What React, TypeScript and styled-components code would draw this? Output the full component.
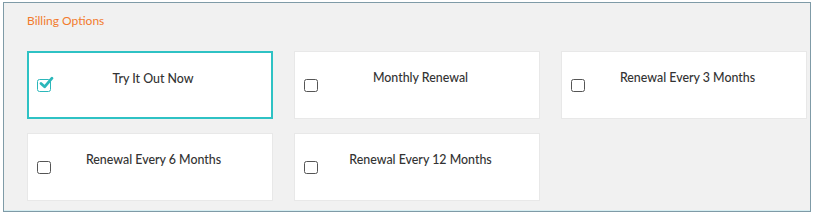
import styled, { createGlobalStyle } from "styled-components";

const GlobalStyle = createGlobalStyle`
  html, body {
    margin: 0;
    padding: 0;
    background: #ffffff;
  }
  body {
    font-family: Lato, "Liberation Sans", sans-serif;
  }
`;

const Panel = styled.section`
  box-sizing: border-box;
  margin: 2px 0 0 3px;
  width: 808px;
  height: 210px;
  background: #f1f1f1;
  border: 1px solid #7f9ba7;
  box-shadow: inset 0 -1px 0 #d6eef2;
  padding: 10px 0 0 23px;
`;

const Title = styled.h3`
  margin: 0;
  font-size: 12px;
  line-height: 16px;
  font-weight: 400;
  color: #f27b2d;
`;

const Grid = styled.div`
  display: grid;
  grid-template-columns: repeat(3, 246px);
  column-gap: 21px;
  row-gap: 14px;
  margin-top: 22px;
`;

const Card = styled.label<{ $selected?: boolean }>`
  box-sizing: border-box;
  height: 68px;
  display: flex;
  align-items: center;
  padding: 0 16px 0 ${(p) => (p.$selected ? 8 : 9)}px;
  background: #ffffff;
  border: ${(p) => (p.$selected ? "2px solid #2ec2c4" : "1px solid #e8e8e8")};
  cursor: pointer;
`;

const Box = styled.span<{ $checked?: boolean }>`
  position: relative;
  box-sizing: border-box;
  flex: 0 0 14px;
  width: 14px;
  height: 13px;
  margin-top: ${(p) => (p.$checked ? 0 : 1)}px;
  border-radius: 2.5px;
  border: 1.6px solid ${(p) => (p.$checked ? "#2bb7ba" : "#555555")};
  background: #ffffff;
`;

const Label = styled.span`
  flex: 1;
  align-self: flex-start;
  margin-top: 18px;
  text-align: center;
  font-size: 12.4px;
  line-height: 16px;
  font-weight: 500;
  color: #333333;
`;

const CheckMark = styled.svg`
  position: absolute;
  left: 1px;
  top: -4px;
`;

const options = [
  "Try It Out Now",
  "Monthly Renewal",
  "Renewal Every 3 Months",
  "Renewal Every 6 Months",
  "Renewal Every 12 Months",
];

const Check = () => (
  <CheckMark width="15" height="14" viewBox="0 0 15 14">
    <path
      d="M2 7.5 L5.6 10.8 L13 2.2"
      fill="none"
      stroke="#2bb7ba"
      strokeWidth="2.8"
      strokeLinecap="round"
      strokeLinejoin="round"
    />
  </CheckMark>
);

export default function App() {
  const selected = 0;
  return (
    <>
      <GlobalStyle />
      <Panel>
        <Title>Billing Options</Title>
        <Grid>
          {options.map((o, i) => (
            <Card key={o} $selected={i === selected}>
              <Box $checked={i === selected}>{i === selected && <Check />}</Box>
              <Label>{o}</Label>
            </Card>
          ))}
        </Grid>
      </Panel>
    </>
  );
}
